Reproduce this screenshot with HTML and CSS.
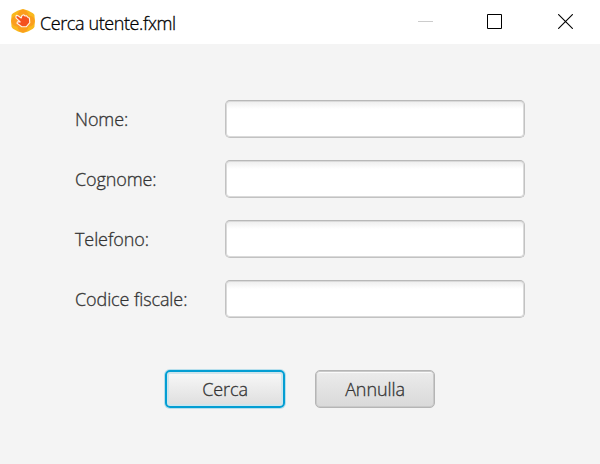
FILE: index.html
```html
<!DOCTYPE html>
<html lang="it">
<head>
<meta charset="utf-8">
<title>Cerca utente.fxml</title>
<link rel="stylesheet" href="styles.css">
</head>
<body>
<header class="titlebar">
  <svg class="logo" width="24" height="24" viewBox="0 0 24 24">
    <path d="M12 0 17 1.6 22 4.2Q24 5.5 23.6 8L24 12 23.6 16Q24 18.5 22 19.8L17 22.4 12 24 7 22.4 2 19.8Q0 18.5.4 16L0 12 .4 8Q0 5.5 2 4.2L7 1.6Z" fill="#f9b81c"/>
    <g fill="#fb8c1e" fill-opacity=".6">
      <ellipse cx="12" cy="7" rx="5.5" ry="6.5"/>
      <ellipse cx="12" cy="17" rx="5.5" ry="6.5"/>
      <ellipse cx="6.5" cy="12" rx="6.2" ry="5.5"/>
      <ellipse cx="17.5" cy="12" rx="6.2" ry="5.5"/>
    </g>
    <path d="M5 7Q5.6 6 7 6.8L10.2 9 11 6.4 12.8 5.8 14 7 15.6 6.8 17 8.4 18.4 9 18.8 13.6 15.4 17.6 10.8 17.8 6 14.2 6.4 12.8 9.2 13 5 8.8Z" fill="#f4511e" stroke="#fff3e6" stroke-width="1.1" stroke-linejoin="round"/>
  </svg>
  <h1 class="title">Cerca utente.fxml</h1>
  <div class="controls">
    <svg class="minimize" width="15" height="15" viewBox="0 0 15 15"><path d="M0 7.5h15" stroke="#ccc"/></svg>
    <svg class="maximize" width="15" height="15" viewBox="0 0 15 15"><path d="M.5.5h14v14H.5z" fill="none" stroke="#000"/></svg>
    <svg class="close" width="15" height="15" viewBox="0 0 15 15"><path d="M.2.2l14.6 14.6M14.8.2.2 14.8" stroke="#000" stroke-width="1.1"/></svg>
  </div>
</header>
<form class="form">
  <div class="row"><label class="label" for="nome">Nome:</label><input class="field" id="nome"></div>
  <div class="row"><label class="label" for="cognome">Cognome:</label><input class="field" id="cognome"></div>
  <div class="row"><label class="label" for="telefono">Telefono:</label><input class="field" id="telefono"></div>
  <div class="row"><label class="label" for="codice">Codice fiscale:</label><input class="field" id="codice"></div>
  <div class="actions">
    <button class="button primary" type="button">Cerca</button>
    <button class="button" type="button">Annulla</button>
  </div>
</form>
</body>
</html>
```
FILE: styles.css
```css
* { box-sizing: border-box; }
body {
  margin: 0;
  height: 464px;
  background: #f4f4f4;
  color: #333;
  font: 300 18px/24px "Open Sans", "Noto Sans", sans-serif;
  letter-spacing: -0.1px;
  -webkit-text-stroke: 0.3px;
  overflow: hidden;
}
.titlebar {
  display: flex;
  align-items: center;
  height: 44px;
  padding: 0 27px 2px 11px;
  background: #fff;
}
.title {
  margin: 0 0 0 5px;
  padding-top: 3px;
  color: #000;
  font-size: 18px;
  font-weight: 300;
  letter-spacing: -0.4px;
}
.controls { display: flex; margin-left: auto; }
.maximize { margin-left: 54px; }
.close { margin-left: 56px; }
svg { display: block; }
.form { padding: 56px 75px 0; }
.row {
  display: flex;
  align-items: center;
  height: 38px;
  margin-bottom: 22px;
}
.label { width: 150px; white-space: nowrap; }
.field {
  width: 300px;
  height: 38px;
  padding: 0 10px;
  border: 1px solid #c2c2c2;
  border-top-color: #b8b8b8;
  border-radius: 5px;
  outline: none;
  background: linear-gradient(#ededed, #fff 8px);
  box-shadow: inset 0 0 0 1px #dadada;
  font: inherit;
}
.actions {
  display: flex;
  justify-content: center;
  gap: 30px;
  padding-top: 30px;
}
.button {
  width: 120px;
  height: 38px;
  padding: 0;
  border: 1px solid #b5b5b5;
  border-radius: 5px;
  background: linear-gradient(#ececec, #d9d9d9);
  box-shadow: inset 0 0 0 1px #c9c9c9, inset 0 2px 0 #fafafa;
  color: #333;
  font: inherit;
  letter-spacing: inherit;
}
.primary {
  border: 2px solid #039ed3;
  background: linear-gradient(#f8f8f8, #dedede);
  box-shadow: 0 0 0 1px #b8dfec, inset 0 0 0 2px #cfe5ec;
}
```
